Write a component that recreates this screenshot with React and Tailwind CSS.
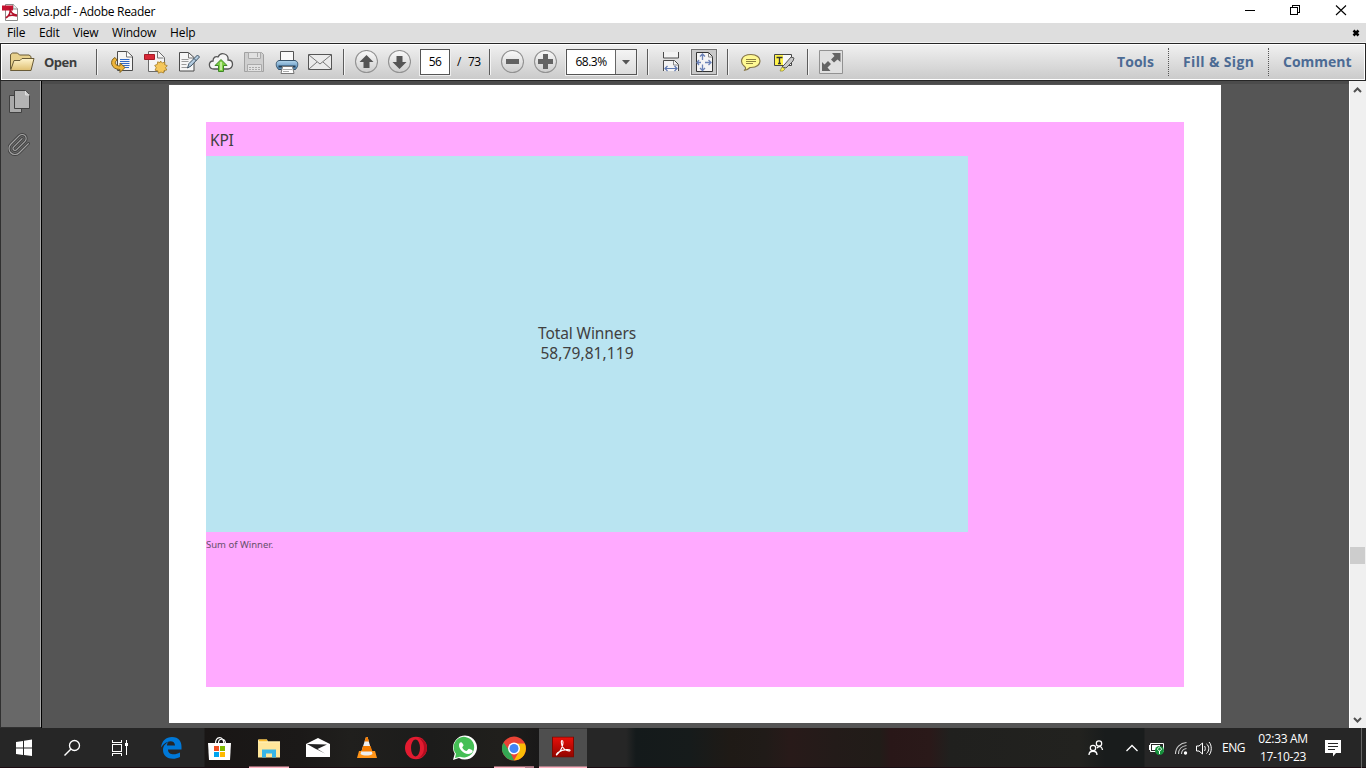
import React from "react";

const Icon = ({ box, className, children }) => (
  <svg viewBox={box} className={"block shrink-0 " + className} fill="none">
    {children}
  </svg>
);

const Sep = ({ className = "" }) => (
  <div className={"h-[26px] w-[2px] shrink-0 border-l border-[#5c5c5c] bg-[#f4f4f4] " + className} />
);

const Round = ({ box, cx, children }) => (
  <Icon box={box} className="ml-[9px] h-6 w-6">
    <circle cx={cx} cy="61.5" r="11" fill="url(#round)" stroke="#929292" strokeWidth="1.1" />
    {children}
  </Icon>
);

const CLIP =
  "m21.44 11.05-9.19 9.19a6 6 0 0 1-8.49-8.49l8.57-8.57A4 4 0 1 1 18 8.84l-8.59 8.57a2 2 0 0 1-2.83-2.83l8.49-8.48";

function TitleBar() {
  return (
    <div className="flex h-[23px] shrink-0 items-center bg-white">
      <Icon box="0 2 20 18" className="ml-px h-[18px] w-5">
        <path d="M4.500 3.500h8l4 4v12h-12z" fill="#fff" stroke="#8a8a8a" />
        <path d="M12 3v5h5" fill="#eee" stroke="#8a8a8a" />
        <path d="M1 4.500h11v5H1z" fill="#c4122f" />
        <path d="M5 17c3-2 5-6 4-9-1-1 0-1 0 0 1 4 4 6 7 6M5 17c2-3 7-3 11-2" stroke="#b3122b" strokeWidth="1.500" />
      </Icon>
      <span className="ml-[2px] whitespace-nowrap text-[12px] leading-4 tracking-[-0.300px] text-black">selva.pdf - Adobe Reader</span>
      <Icon box="1240 0 110 23" className="ml-auto mr-4 h-[23px] w-[110px]">
        <path d="M1245 10.500h10M1290.500 7.500h7v7h-7zM1292.500 7v-1.500h7v7h-2" stroke="#000" shapeRendering="crispEdges" />
        <path d="m1336 5.500 10 9.500m0-9.500-10 9.500" stroke="#000" strokeWidth="1.100" />
      </Icon>
    </div>
  );
}

function MenuBar() {
  return (
    <div className="flex h-5 shrink-0 items-center border-b border-[#f2f2f2] bg-[#dedede] text-[12px] leading-4 text-black">
      <span className="ml-[7px] w-8 tracking-[-0.200px]">File</span>
      <span className="w-[34px] tracking-[-0.200px]">Edit</span>
      <span className="w-[39px] tracking-[-0.200px]">View</span>
      <span className="w-[58px] tracking-[-0.200px]">Window</span>
      <span className="tracking-[-0.100px]">Help</span>
      <Icon box="0 0 8 8" className="ml-auto mr-[6px] h-2 w-2">
        <path d="m1.500 1.500 5 5m0-5-5 5" stroke="#000" strokeWidth="2.500" />
      </Icon>
    </div>
  );
}

function Toolbar() {
  return (
    <div className="h-[38px] shrink-0 border border-[#262626]">
      <div className="flex h-9 items-center border border-white bg-linear-to-b from-[#f0f0f0] to-[#cbcbcb] pl-[7px] text-black">
        <Icon box="9 50 26 24" className="h-6 w-[26px]">
          <path d="M10.500 69V54.500l2-1.500h5l2 2h9.500l2 1.500v2" fill="#e8d18d" stroke="#695b37" />
          <path d="m10.500 70.500 3.500-10h6l2-2h12l-3 12z" fill="url(#folder)" stroke="#695b37" />
        </Icon>
        <span className="ml-[9px] w-[50px] text-[13px] font-bold leading-5 tracking-[-0.500px] text-[#3d3d3d]">Open</span>
        <Sep className="ml-[2px]" />

        <Icon box="110 50 24 24" className="ml-3 h-6 w-6">
          <path d="M117.500 51.500h9.500l5.500 5v14h-15z" fill="#f5f5f5" stroke="#4b4b4b" />
          <path d="M126.500 51.500v5.500h5.500" fill="#fff" stroke="#777" />
          <path d="M120 59.500h9.500M120 61.500h9.500M120 63.500h9.500M122 65.500h7.500M124 67.500h5" stroke="#3269c4" />
          <path d="M115 57.500c-6 3-4 12 5 12v3l5-5-5-4.500v3c-5 0-6-4-3-6z" fill="#efb53a" stroke="#81621d" />
        </Icon>
        <Icon box="143 50 25 24" className="ml-[9px] h-6 w-[25px]">
          <path d="M148.500 51.500h10l6 6v14h-16z" fill="#f5f5f5" stroke="#6a6a6a" />
          <path d="M157.500 52v6h6" stroke="#777" />
          <path d="M144.500 54.500h10v5h-10z" fill="#d82836" stroke="#a51b26" />
          <path d="m160.500 61 1.800 2 2.500-1v2.700l2.500 1-1.800 2 1.300 2.300-2.700.5-.5 2.500-2.600-1-2.500 1.300-.8-2.600-2.700-.5 1.200-2.500-1.500-2.300 2.600-1 .4-2.600 2.300 1z" fill="#f5c75a" stroke="#a47b24" strokeWidth=".8" />
        </Icon>
        <Icon box="177 50 25 24" className="ml-[9px] h-6 w-[25px]">
          <path d="M179.500 52.500h9l5.500 5v13.500h-14.500z" fill="#f5f5f5" stroke="#4b4b4b" />
          <path d="M188.500 52.500v5.500h5.500" stroke="#777" />
          <path d="M181.500 59.500h7M181.500 61.500h7M181.500 64.500h5M181.500 67.500h7" stroke="#9a9a9a" />
          <path d="m187.500 68 1.500-4.500 8.500-8.500 2 2-8.500 9z" fill="#b5cde1" stroke="#3f5364" />
          <path d="m194 58.500 2.500 2.500" stroke="#3f5364" />
        </Icon>
        <Icon box="208 50 26 24" className="ml-[6px] h-6 w-[26px]">
          <path d="M214 69c-6 0-6-8-1-8 0-4 3-5 5-4 3-6 11-3 10 3 6 0 6 8 0 9z" fill="#f5f5f5" stroke="#565656" strokeWidth="1.300" />
          <path d="m221 59.500 6 6h-3.500v6h-5v-6H215z" fill="#7ed043" stroke="#3e8628" />
          <path d="M221 62v8" stroke="#d8f5bb" strokeWidth="1.500" />
        </Icon>
        <Icon box="243 50 23 24" className="ml-[9px] h-6 w-[23px]">
          <path d="M244.500 52.500h17l2 2v17h-19z" fill="#cfcfcf" stroke="#a1a1a1" />
          <path d="M248.500 52.500h12v6h-12zM257.500 53v4M247.500 64.500h14v7h-14z" fill="#e1e1e1" stroke="#aaa" />
          <path d="M249 67.500h11M249 69.500h11" stroke="#aaa" strokeDasharray="2 1" />
        </Icon>
        <Icon box="275 49 25 25" className="ml-[9px] h-[25px] w-[25px]">
          <path d="M280.500 50.500h13v10h-13z" fill="#fafafa" stroke="#545454" />
          <path d="M279 59.500h16c3 1 3 3 2.500 6l-2 3h-17l-2-3c-.5-3-.5-5 2.500-6z" fill="url(#printer)" stroke="#37536b" />
          <path d="M278.500 65.500h17" stroke="#263f56" strokeWidth="2" />
          <path d="M282.500 65.500h10l1.500 7h-13z" fill="#fff" stroke="#777" />
          <path d="M283 68.500h9M283 70.500h6" stroke="#aaa" />
        </Icon>
        <Icon box="307 50 26 24" className="ml-[7px] h-6 w-[26px]">
          <path d="M308.500 54.500h23v15h-23z" fill="#ebebeb" stroke="#555" />
          <path d="m309 55 11 9 11-9M309 69l8-7m14 7-8-7" stroke="#777" />
        </Icon>
        <Sep className="ml-[10px]" />

        <Round box="354 50 24 24" cx="366.5">
          <path d="m366.500 55 7 7h-4v6h-6v-6h-4z" fill="#555" />
        </Round>
        <Round box="387 50 24 24" cx="399.5">
          <path d="m399.500 69-7-7h4v-6h6v6h4z" fill="#555" />
        </Round>
        <div className="ml-[9px] h-[26px] w-[30px] border border-[#555] bg-white text-center text-[12px] leading-6 tracking-[-0.600px] outline outline-[#eee]">56</div>
        <span className="ml-[7px] w-[11px] text-[12px]">/</span>
        <span className="w-[21px] text-[12px] tracking-[-0.600px]">73</span>
        <Sep />

        <Round box="500 50 24 24" cx="512.5">
          <path d="M506 59h13v5h-13z" fill="#636363" />
        </Round>
        <Round box="533 50 24 24" cx="545.5">
          <path d="M543 54h5v5h5v5h-5v5h-5v-5h-5v-5h5z" fill="#636363" />
        </Round>
        <div className="ml-[9px] flex h-[26px] w-[71px] border border-[#555] bg-white outline outline-[#eee]">
          <div className="w-12 text-center text-[12px] leading-6 tracking-[-0.500px]">68.3%</div>
          <div className="flex grow items-center justify-center border-l border-[#666] bg-linear-to-b from-[#f4f4f4] to-[#dcdcdc]">
            <Icon box="0 0 8 5" className="h-[5px] w-2"><path d="M0 0h8L4 4.500z" fill="#555" /></Icon>
          </div>
        </div>
        <Sep className="ml-[10px]" />

        <Icon box="661 50 20 24" className="ml-3 h-6 w-5">
          <path d="M663.500 52v6h15v-6" fill="#f3f3f3" stroke="#4a4a4a" />
          <path d="M663.500 71V60.500h11l4 4V71z" fill="#f3f3f3" />
          <path d="M663.500 71V60.500h11l4 4V71" stroke="#4a4a4a" />
          <path d="M673.500 61v4h5" stroke="#888" />
          <path d="M665 68.500h12m-9.500-2.500-2.500 2.500 2.500 2.500m7-5 2.500 2.500-2.500 2.500" stroke="#5f78b0" strokeWidth="1.200" />
        </Icon>
        <div className="ml-[10px] flex h-[26px] w-[26px] items-center justify-center border border-[#717171] bg-[#c9c9c9] outline outline-[#f2f2f2]">
          <Icon box="694 51 20 22" className="h-[22px] w-5">
            <path d="M696.500 52.500h12l4 4v15h-16z" fill="#f5f5f5" stroke="#333" />
            <path d="M708.500 53v4h4" stroke="#888" />
            <path d="M702.500 60v-6m-2.500 2.500 2.500-2.500 2.500 2.500m-2.500 8v6m-2.500-2.500 2.500 2.500 2.500-2.500M705 62.500h6m-2.500-2.500 2.500 2.500-2.500 2.500M701 62.500h-4m2-2.500-2 2.500 2 2.500" stroke="#6d83b8" strokeWidth="1.300" />
          </Icon>
        </div>
        <Sep className="ml-[10px]" />

        <Icon box="740 50 22 24" className="ml-[11px] h-6 w-[22px]">
          <path d="M744.500 66.500c-5-4-4-12 6.500-12 12 0 12 13 0 13h-1c-2 2-4 3-6 3 2-1 2-3 .5-4z" fill="#fff993" stroke="#85754a" strokeWidth="1.200" />
          <path d="M746 59.500h10M746 61.500h10M746 63.500h7" stroke="#8c8141" />
        </Icon>
        <Icon box="773 50 23 24" className="ml-[11px] h-6 w-[23px]">
          <path d="M774.500 54.500h17v11h-17z" fill="#f8f8f8" stroke="#444" />
          <path d="M775 55h8v10h-8z" fill="#fff34a" />
          <path d="M776.500 57.500h6m-3 0v6m-1.500 0h3" stroke="#333" strokeWidth="1.300" />
          <path d="m782 67 3-3 6-7 3 1-1 3-7 7z" fill="#c9c9c9" stroke="#555" />
          <path d="m780 71 2-4 3 2-2 2z" fill="#fff34a" stroke="#8b843a" strokeWidth=".7" />
        </Icon>
        <Sep className="ml-[11px]" />
        <Icon box="818 49 26 26" className="ml-[9px] h-[26px] w-[26px]">
          <path d="M819.500 50.500h23v23h-23z" fill="#e0e0e0" stroke="#929292" />
          <path d="M832 53h8.500v9l-3-2.500-3.500 3-3-3 3.500-3.500zM830.500 71H822v-9l2.500 2.500 3.500-3.500 3 3-3.500 3.500z" fill="#646464" />
        </Icon>

        <div className="ml-auto flex items-center whitespace-nowrap text-[14px] font-bold leading-5 text-[#4c6b94]">
          <span className="w-[51px] tracking-[0.050px]">Tools</span>
          <div className="h-7 w-0 border-l border-dotted border-[#555]" />
          <span className="ml-[14px] w-[85px] tracking-[0.350px]">Fill &amp; Sign</span>
          <div className="h-7 w-0 border-l border-dotted border-[#555]" />
          <span className="ml-[14px] w-[81px]">Comment</span>
        </div>
      </div>
    </div>
  );
}

function Workspace() {
  return (
    <div className="flex h-[647px] shrink-0 bg-[#555]">
      <aside className="flex w-[42px] shrink-0 flex-col border-r border-black bg-[#303030] pb-px pl-px">
        <div className="grow border-r border-[#a7a7a7] bg-[#686868] pl-[7px] pt-2">
          <Icon box="8 89 24 26" className="h-[26px] w-6">
            <path d="M9.500 95.500h12v17h-12z" fill="#aaa" stroke="#414141" />
            <path d="M14.500 90.500h11l4 4v14h-15z" fill="#b3b3b3" stroke="#414141" />
            <path d="M25.500 91v4h4" fill="#ccc" stroke="#ddd" />
          </Icon>
          <Icon box="8 132 24 26" className="mt-[17px] h-[26px] w-6">
            <g transform="translate(7 132.500)" strokeLinecap="round">
              <path d={CLIP} stroke="#414141" strokeWidth="3" />
              <path d={CLIP} stroke="#a5a5a5" strokeWidth="1.100" />
            </g>
          </Icon>
        </div>
      </aside>
      <main className="grow border-t-[3px] border-[#4b4b4b] pl-[127px] pt-px">
        <article className="h-[638px] w-[1052px] bg-white px-[37px] pt-[37px] font-['Noto_Sans',sans-serif] text-[#404040]">
          <section className="h-[565px] w-[978px] bg-[#ffaaff]">
            <h1 className="h-[34px] pl-1 text-[15.500px] leading-[36px] tracking-[-0.200px]">KPI</h1>
            <div className="flex h-[376px] w-[762px] flex-col items-center justify-center bg-[#b9e4f1] pb-[2px] text-[15.500px] leading-5">
              <div className="tracking-[-0.100px]">Total Winners</div>
              <div className="tracking-[0.080px]">58,79,81,119</div>
            </div>
            <p className="pt-[5px] text-[9.500px] leading-4 text-[#66506a]">Sum of Winner.</p>
          </section>
        </article>
      </main>
      <div className="flex w-[17px] shrink-0 flex-col border-l border-white bg-[#f0f0f0]">
        <Icon box="0 0 16 17" className="h-[17px] w-4"><path d="m4 11 3.500-3.500L11 11" stroke="#505050" strokeWidth="2" /></Icon>
        <div className="mt-[449px] h-[17px] w-[15px] bg-[#cdcdcd]" />
        <Icon box="0 0 16 17" className="mt-auto h-[17px] w-4"><path d="m4 7 3.500 3.500L11 7" stroke="#505050" strokeWidth="2" /></Icon>
      </div>
    </div>
  );
}

function Taskbar() {
  return (
    <footer className="flex h-10 shrink-0 items-center border-b border-[#1c0c12] bg-[linear-gradient(90deg,#262626_0_204px,#191615_205px,#1b1918_300px,#201f1d_350px,#1c1c1b_430px,#201f1c_500px,#191818_539px,#262626_588px_626px,#141a1b_636px,#161b1b_690px,#1f1a16_730px,#201b18_765px,#281a19_790px,#231b19_835px,#211c18_880px,#291718_890px,#2a1919_930px,#20201e_950px,#22221f_1080px,#191c1c_1105px,#191c1c_1144px,#262626_1145px)] text-[12px] leading-4 text-white">
      <Icon box="15 739 18 18" className="ml-[15px] h-[18px] w-[18px]">
        <path d="m16 742 7-1v6.500h-7zM24 740.800l8-1.200v7.900h-8zM16 748.500h7v6.500l-7-1zM24 748.500h8v7.500l-8-1.100z" fill="#fff" />
      </Icon>
      <Icon box="62 738 20 20" className="ml-[29px] h-5 w-5">
        <circle cx="74.500" cy="745.500" r="5" stroke="#fff" strokeWidth="1.300" />
        <path d="m71 749-6.500 6.500" stroke="#fff" strokeWidth="1.400" />
      </Icon>
      <Icon box="110 738 20 20" className="ml-7 h-5 w-5">
        <path d="M112.500 740v2h9v-2M112.500 744.500h9v7h-9zM112.500 755.500v-2h9v2M126.500 740v15" stroke="#fff" shapeRendering="crispEdges" />
        <path d="M125 743h3v3h-3z" fill="#fff" />
      </Icon>
      <Icon box="160 736 23 24" className="ml-[30px] h-6 w-[23px]">
        <path d="M161 747.500c1-7 5-10.500 11-10.500 7 0 9.500 5 9.500 9.500v3h-13.500c0 5.500 7 6 12 3v4.500c-8 4-17 1-17-7 0-4 2.500-6.500 5.500-8-1 1-1.500 2-1.500 3.500h8c0-6-9-6-14 2z" fill="#0078d7" />
      </Icon>
      <Icon box="206 734 26 26" className="ml-[23px] h-[26px] w-[26px]">
        <path d="M215.500 743c0-8 8-9 8.500 0M218.500 742c0-5 6.500-5 7 0" stroke="#fff" strokeWidth="1.200" />
        <path d="M208 742h23l-1 17h-21z" fill="#fff" />
        <path d="M214 745h5v5h-5z" fill="#f25022" /><path d="M220 745h5v5h-5z" fill="#7fba00" />
        <path d="M214 751h5v5h-5z" fill="#00a4ef" /><path d="M220 751h5v5h-5z" fill="#ffb900" />
      </Icon>
      <div className="ml-[17px] flex h-10 w-10 translate-y-[0.500px] items-center justify-center border-b-2 border-[#ffb1c0] pt-0.5">
        <Icon box="257 737 24 22" className="h-[22px] w-6">
          <path d="M258 739h9l1 2h12v16h-22z" fill="#ffe69a" />
          <path d="M259 739h8v2h-8z" fill="#f6b72d" />
          <path d="M258 741h22v1h-22z" fill="#fff2bd" />
          <path d="M262 749h14v8h-4v-4h-6v4h-4z" fill="#36b5e7" />
        </Icon>
      </div>
      <Icon box="305 737 26 22" className="ml-4 h-[22px] w-[26px]">
        <path d="m306 744 12-6 12 6v13h-24z" fill="#fff" />
        <path d="m307 744 20 .5-9.500 4.500 7.500 4.500-10-5z" fill="#222" />
      </Icon>
      <Icon box="356 736 22 24" className="ml-[25px] h-6 w-[22px]">
        <path d="m359 751-2 7h20l-2-7z" fill="#ff9418" />
        <path d="m366 737-5.500 17c3 2 9 2 12 0l-5-17z" fill="#eee" />
        <path d="m366 737-1.500 4.500h4.500l-1.500-4.500zM363 746h7.500l2 5.500h-11z" fill="#f57c00" />
      </Icon>
      <Icon box="404 736 24 24" className="ml-[26px] h-6 w-6">
        <ellipse cx="416" cy="748" rx="11" ry="11.200" fill="#e31b30" />
        <path d="M418 738c8 3 8 17 0 20 12-1 12-19 0-20" fill="#b30d20" />
        <ellipse cx="415.500" cy="748" rx="4.500" ry="8.500" fill="#211e1c" />
      </Icon>
      <Icon box="452 735 26 26" className="ml-6 h-[26px] w-[26px]">
        <path d="m453 760 1.700-6.200A12 12 0 1 1 459 758z" fill="#fff" />
        <path d="m455 758 1-4.200a10.300 10.300 0 1 1 4 2.900z" fill="#45bf55" />
        <path d="M459.500 743c2-2 3 0 4 2 .5 1-2 2-1 3 1 2 3 3 4 3 1 0 2-3 3-2 2 1 4 1 3 3-5 6-16-3-13-9z" fill="#fff" />
      </Icon>
      <div className="ml-4 flex h-10 w-10 translate-y-[0.500px] flex-col items-center">
        <Icon box="502 728 24 38" className="h-[38px] w-6">
          <circle cx="514" cy="748" r="12" fill="#ea4335" />
          <path d="m503.600 742 6.500 9.500 4 8.500A12 12 0 0 1 503.600 742z" fill="#34a853" />
          <path d="M514 743h10.800A12 12 0 0 1 514 760l5-9z" fill="#fbbc05" />
          <circle cx="514" cy="748" r="6" fill="#fff" /><circle cx="514" cy="748" r="4.500" fill="#4285f4" />
        </Icon>
        <div className="flex h-0.5 w-10 bg-[#ffb1c0]"><div className="ml-auto w-[9px] bg-[#b27885]" /></div>
      </div>
      <div className="ml-[5px] flex h-10 w-12 translate-y-[0.500px] items-center justify-center border-b-2 border-[#ffb1c0] bg-[#4e4e4e] pb-px">
        <Icon box="552 736 22 21" className="h-[21px] w-[22px]">
          <path d="M552 736h22v21h-22z" fill="#7e0900" /><path d="M553 737h20v19h-20z" fill="url(#acro)" />
          <path d="M562 740c-1 0-1 4 1 7s6 4 7 3-6-2-12 2c-2 2-2 3-1 2 4-3 6-9 6-12 0-1 0-2-1-2z" stroke="#fff" strokeWidth="1.100" />
        </Icon>
      </div>
      <Icon box="1087 738 18 20" className="ml-[500px] h-5 w-[18px]">
        <circle cx="1093" cy="748" r="2.700" stroke="#fff" strokeWidth="1.200" />
        <circle cx="1099" cy="743.500" r="2.700" stroke="#fff" strokeWidth="1.200" />
        <path d="M1089 755c0-5 8-5 8 0M1097 748c3-3 5-1 5.500 2" stroke="#fff" strokeWidth="1.300" />
      </Icon>
      <Icon box="1125 740 14 16" className="ml-5 h-4 w-[14px]"><path d="m1126.500 751 5.500-5.500 5.500 5.500" stroke="#fff" strokeWidth="1.300" /></Icon>
      <Icon box="1148 740 18 18" className="ml-[9px] h-[18px] w-[18px]">
        <path d="M1150.500 744.500h13v8h-13z" stroke="#fff" /><path d="M1149 746h1v5h-1zM1152 746h8v5h-8z" fill="#fff" />
        <circle cx="1159.500" cy="751.500" r="4.500" fill="#16903b" />
        <path d="M1159.500 755v-3m0 0c-3-1-2-3 0-4 2 1 3 3 0 4" stroke="#fff" />
      </Icon>
      <Icon box="1173 740 16 18" className="ml-[7px] h-[18px] w-4">
        <path d="M1175.500 755c0-7 5-11 11-11.500M1178.500 755c0-5 3.500-8 8-8.500M1181.500 755c0-3 2-5 5-5.500" stroke="#ccc" strokeWidth="1.100" />
        <circle cx="1185.500" cy="754" r="1.700" fill="#fff" />
      </Icon>
      <Icon box="1195 740 18 16" className="ml-[6px] h-4 w-[18px]">
        <path d="M1196.500 746h2.500l3.500-3v11l-3.500-3h-2.500zM1204.500 746c1 1 1 4 0 5M1206.500 744c3 2 3 7 0 9.500M1209 742c3 3 3 10 0 13" stroke="#fff" />
      </Icon>
      <span className="ml-[9px] w-[26px] tracking-[-0.500px]">ENG</span>
      <div className="ml-[2px] w-[66px] shrink-0 whitespace-nowrap pt-px text-center leading-[18px] tracking-[-0.350px]">
        <div>02:33 AM</div><div>17-10-23</div>
      </div>
      <Icon box="1324 738 18 20" className="ml-2 h-5 w-[18px]">
        <path d="M1325 740h16v13h-5l-3 3.500v-3.500h-8z" fill="#fff" />
        <path d="M1328 743.500h10M1328 746.500h10M1328 749.500h7" stroke="#262626" />
      </Icon>
      <div className="ml-auto mr-1 h-10 w-px bg-[#666]" />
    </footer>
  );
}

export default function App() {
  return (
    <div className="flex h-[768px] w-[1366px] flex-col overflow-hidden bg-[#555] font-['Open_Sans','Noto_Sans',sans-serif]">
      <svg className="absolute h-0 w-0">
        <defs>
          <linearGradient id="round" x1="0" y1="0" x2="0" y2="1"><stop stopColor="#fafafa" /><stop offset="1" stopColor="#cdcdcd" /></linearGradient>
          <linearGradient id="folder" x1="0" y1="0" x2="0" y2="1"><stop stopColor="#fff5cf" /><stop offset="1" stopColor="#dfbf70" /></linearGradient>
          <linearGradient id="printer" x1="0" y1="0" x2="0" y2="1"><stop stopColor="#b4d6ee" /><stop offset="1" stopColor="#4a83b2" /></linearGradient>
          <linearGradient id="acro" x1="0" y1="0" x2="0" y2="1"><stop stopColor="#e60f09" /><stop offset="1" stopColor="#930500" /></linearGradient>
        </defs>
      </svg>
      <TitleBar />
      <MenuBar />
      <Toolbar />
      <Workspace />
      <Taskbar />
    </div>
  );
}
